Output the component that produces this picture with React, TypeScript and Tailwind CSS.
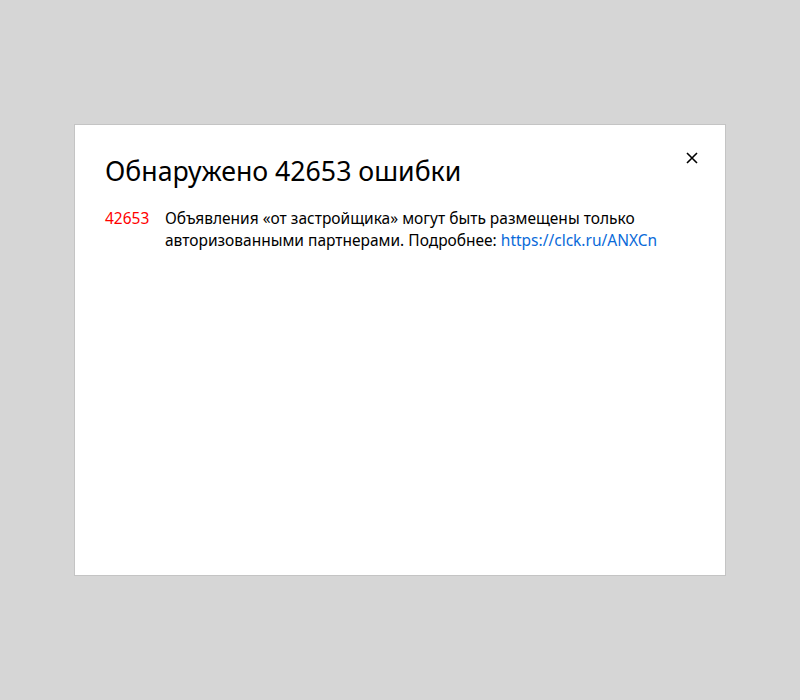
import React from "react";

const App: React.FC = () => {
    return (
        <div
            className="w-[800px] h-[700px] bg-[#d6d6d6] pt-[124px] pl-[74px]"
            style={{ fontFamily: '"Noto Sans", Arial, sans-serif' }}
        >
            <div className="relative w-[652px] h-[452px] bg-white border border-[#c4c4c4] px-[30px] pt-[26px]">
                <button className="absolute top-[26px] right-[26px] w-[14px] h-[14px] text-black">
                    <svg viewBox="0 0 14 14" width="14" height="14">
                        <path d="M2 2 L12 12 M12 2 L2 12" stroke="currentColor" strokeWidth="1.6" />
                    </svg>
                </button>
                <h1 className="text-[26.7px] leading-[40px] text-black">Обнаружено 42653 ошибки</h1>
                <div className="flex mt-[16px] text-[15.5px] leading-[22px] text-black">
                    <div className="w-[60px] shrink-0 text-[#ff0000]">42653</div>
                    <div className="w-[520px]">
                        Объявления «от застройщика» могут быть размещены только авторизованными партнерами. Подробнее:{" "}
                        <a className="text-[#0a6ad9]" href="#">
                            https://clck.ru/ANXCn
                        </a>
                    </div>
                </div>
            </div>
        </div>
    );
};

export default App;
